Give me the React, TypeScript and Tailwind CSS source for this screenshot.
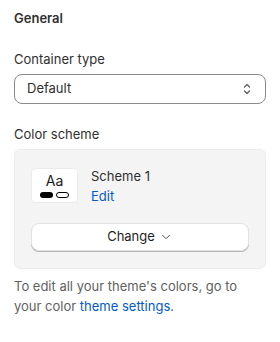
import { ChevronDown } from "lucide-react";

function SelectArrows() {
  return (
    <svg width="12" height="16" viewBox="0 0 12 16" fill="none" stroke="#616161" strokeWidth="1.3" strokeLinecap="round" strokeLinejoin="round">
      <path d="M3.5 6 L6 3.5 L8.5 6" />
      <path d="M3.5 10 L6 12.5 L8.5 10" />
    </svg>
  );
}

export default function App() {
  return (
    <div className="w-[280px] h-[342px] bg-white px-[14px] pt-[9px] text-[13px] text-[#303030] font-['Inter',sans-serif]">
      <h2 className="font-semibold leading-[18px]">General</h2>

      <div className="mt-[22px]">
        <label className="block leading-5">Container type</label>
        <div className="mt-[5px] h-[30px] rounded-lg border border-[#8a8a8a] flex items-center justify-between pl-3 pr-[12px]">
          <span>Default</span>
          <SelectArrows />
        </div>
      </div>

      <div className="mt-5">
        <label className="block leading-5">Color scheme</label>
        <div className="mt-[5px] rounded-md bg-[#f4f4f4] border border-[#ececec] px-4 pt-[18px] pb-[17px]">
          <div className="flex items-start gap-3">
            <div className="w-[47px] h-[35px] shrink-0 rounded bg-white border border-[#ebebeb] flex flex-col items-center justify-center">
              <span className="text-[14px] leading-4 text-[#1a1a1a]">Aa</span>
              <div className="mt-[3px] flex gap-[3px]">
                <span className="w-[13px] h-[6px] rounded-full bg-black" />
                <span className="w-[13px] h-[6px] rounded-full border border-black" />
              </div>
            </div>
            <div className="leading-5 -mt-[2px] h-[35px] pl-px">
              <div className="text-[13px]">Scheme 1</div>
              <div className="text-[#005bd3]">Edit</div>
            </div>
          </div>
          <button className="mt-[20px] w-full h-[28px] rounded-lg bg-white border border-[#e3e3e3] shadow-[0_1px_0_#b5b5b5] flex items-center justify-center gap-1 text-[13px] text-[#1f1f1f]">
            Change
            <ChevronDown size={14} strokeWidth={1.6} className="text-[#4a4a4a]" />
          </button>
        </div>
      </div>

      <p className="mt-[7px] leading-5 text-[#616161]">
        To edit all your theme's colors, go to your color{" "}
        <span className="text-[#005bd3]">theme settings</span>.
      </p>
    </div>
  );
}
